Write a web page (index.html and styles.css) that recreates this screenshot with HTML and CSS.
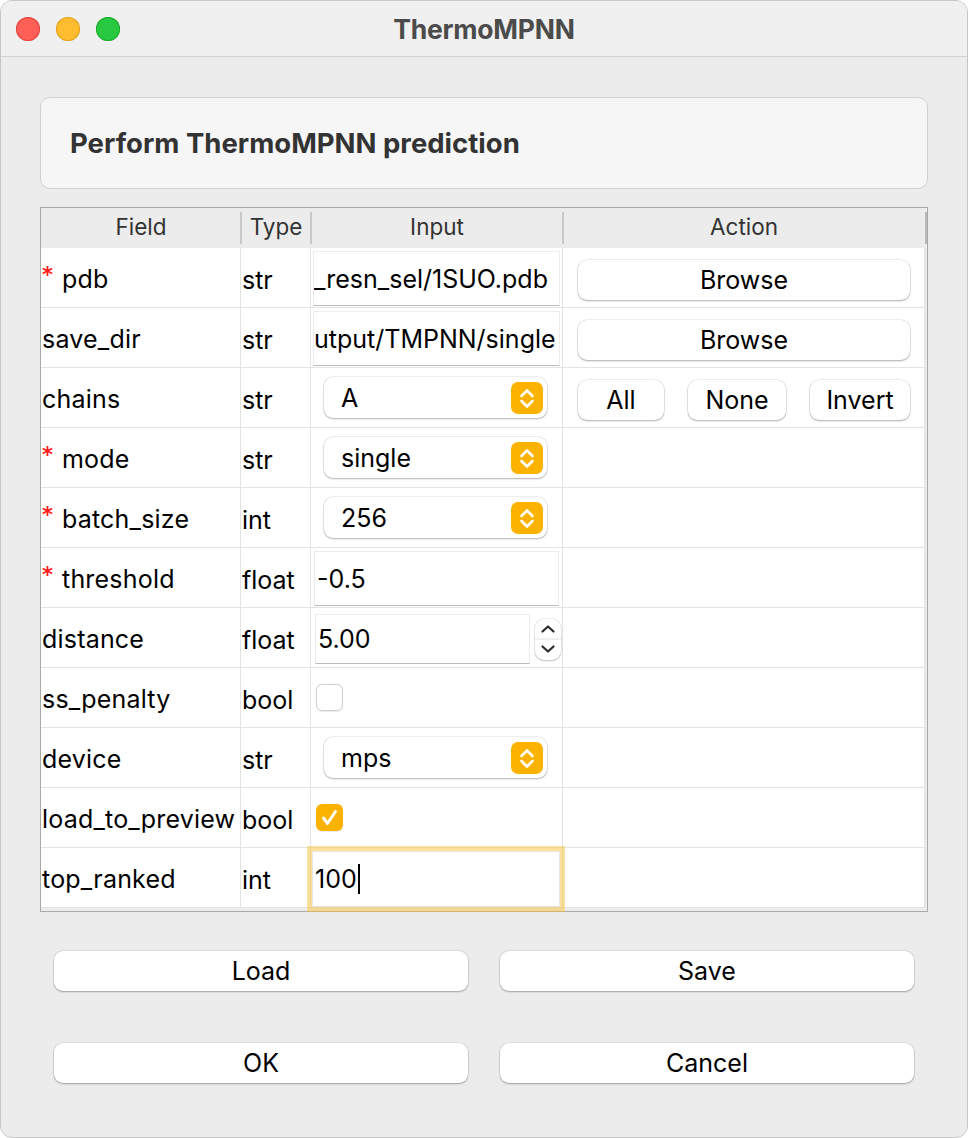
FILE: index.html
```html
<!DOCTYPE html>
<html>
<head>
<meta charset="utf-8">
<title>ThermoMPNN</title>
<link rel="stylesheet" href="styles.css">
</head>
<body>
<div class="window">
  <div class="titlebar">
    <div class="lights">
      <span class="light red"></span>
      <span class="light yellow"></span>
      <span class="light green"></span>
    </div>
    <div class="title">ThermoMPNN</div>
    <div></div>
  </div>

  <div class="content">
    <div class="banner">Perform ThermoMPNN prediction</div>

    <div class="table">
      <div class="thead">
        <div class="th">Field</div>
        <div class="th">Type</div>
        <div class="th">Input</div>
        <div class="th">Action</div>
      </div>

      <div class="row">
        <div class="cell field"><span class="req">*</span>pdb</div>
        <div class="cell type">str</div>
        <div class="cell input"><div class="lineedit">_resn_sel/1SUO.pdb</div></div>
        <div class="cell action"><div class="btn browse">Browse</div></div>
      </div>

      <div class="row">
        <div class="cell field">save_dir</div>
        <div class="cell type">str</div>
        <div class="cell input"><div class="lineedit">utput/TMPNN/single</div></div>
        <div class="cell action"><div class="btn browse">Browse</div></div>
      </div>

      <div class="row">
        <div class="cell field">chains</div>
        <div class="cell type">str</div>
        <div class="cell input">
          <div class="combo"><span>A</span>
            <svg class="chev" width="32" height="32" viewBox="0 0 32 32"><rect width="32" height="32" rx="7" fill="#fcb300"/><polyline points="10.5,14 16,8.5 21.5,14" fill="none" stroke="#fff" stroke-width="2.6" stroke-linecap="round" stroke-linejoin="round"/><polyline points="10.5,19 16,24.5 21.5,19" fill="none" stroke="#fff" stroke-width="2.6" stroke-linecap="round" stroke-linejoin="round"/></svg>
          </div>
        </div>
        <div class="cell action">
          <div class="chain-btns">
            <div class="btn small">All</div>
            <div class="btn small">None</div>
            <div class="btn small">Invert</div>
          </div>
        </div>
      </div>

      <div class="row">
        <div class="cell field"><span class="req">*</span>mode</div>
        <div class="cell type">str</div>
        <div class="cell input">
          <div class="combo"><span>single</span>
            <svg class="chev" width="32" height="32" viewBox="0 0 32 32"><rect width="32" height="32" rx="7" fill="#fcb300"/><polyline points="10.5,14 16,8.5 21.5,14" fill="none" stroke="#fff" stroke-width="2.6" stroke-linecap="round" stroke-linejoin="round"/><polyline points="10.5,19 16,24.5 21.5,19" fill="none" stroke="#fff" stroke-width="2.6" stroke-linecap="round" stroke-linejoin="round"/></svg>
          </div>
        </div>
        <div class="cell action"></div>
      </div>

      <div class="row">
        <div class="cell field"><span class="req">*</span>batch_size</div>
        <div class="cell type">int</div>
        <div class="cell input">
          <div class="combo"><span>256</span>
            <svg class="chev" width="32" height="32" viewBox="0 0 32 32"><rect width="32" height="32" rx="7" fill="#fcb300"/><polyline points="10.5,14 16,8.5 21.5,14" fill="none" stroke="#fff" stroke-width="2.6" stroke-linecap="round" stroke-linejoin="round"/><polyline points="10.5,19 16,24.5 21.5,19" fill="none" stroke="#fff" stroke-width="2.6" stroke-linecap="round" stroke-linejoin="round"/></svg>
          </div>
        </div>
        <div class="cell action"></div>
      </div>

      <div class="row">
        <div class="cell field"><span class="req">*</span>threshold</div>
        <div class="cell type">float</div>
        <div class="cell input"><div class="lineedit wide">-0.5</div></div>
        <div class="cell action"></div>
      </div>

      <div class="row">
        <div class="cell field">distance</div>
        <div class="cell type">float</div>
        <div class="cell input spinrow">
          <div class="lineedit spinedit">5.00</div>
          <div class="spin">
            <svg width="26" height="41" viewBox="0 0 26 41"><line x1="0" y1="20" x2="26" y2="20" stroke="#e2e2e2" stroke-width="1"/><polyline points="7.5,12.5 13,7.5 18.5,12.5" fill="none" stroke="#2b2b2b" stroke-width="2.2" stroke-linecap="round" stroke-linejoin="round"/><polyline points="7.5,27.5 13,32.5 18.5,27.5" fill="none" stroke="#2b2b2b" stroke-width="2.2" stroke-linecap="round" stroke-linejoin="round"/></svg>
          </div>
        </div>
        <div class="cell action"></div>
      </div>

      <div class="row">
        <div class="cell field">ss_penalty</div>
        <div class="cell type">bool</div>
        <div class="cell input"><div class="checkbox"></div></div>
        <div class="cell action"></div>
      </div>

      <div class="row">
        <div class="cell field">device</div>
        <div class="cell type">str</div>
        <div class="cell input">
          <div class="combo"><span>mps</span>
            <svg class="chev" width="32" height="32" viewBox="0 0 32 32"><rect width="32" height="32" rx="7" fill="#fcb300"/><polyline points="10.5,14 16,8.5 21.5,14" fill="none" stroke="#fff" stroke-width="2.6" stroke-linecap="round" stroke-linejoin="round"/><polyline points="10.5,19 16,24.5 21.5,19" fill="none" stroke="#fff" stroke-width="2.6" stroke-linecap="round" stroke-linejoin="round"/></svg>
          </div>
        </div>
        <div class="cell action"></div>
      </div>

      <div class="row">
        <div class="cell field">load_to_preview</div>
        <div class="cell type">bool</div>
        <div class="cell input">
          <div class="checkbox checked">
            <svg width="27" height="27" viewBox="0 0 27 27"><polyline points="7.5,14 11.5,19.5 19.5,7.5" fill="none" stroke="#fff" stroke-width="3" stroke-linecap="round" stroke-linejoin="round"/></svg>
          </div>
        </div>
        <div class="cell action"></div>
      </div>

      <div class="row">
        <div class="cell field">top_ranked</div>
        <div class="cell type">int</div>
        <div class="cell input"><div class="lineedit focused">100<span class="caret"></span></div></div>
        <div class="cell action"></div>
      </div>
    </div>

    <div class="actions">
      <div class="btn big">Load</div>
      <div class="btn big">Save</div>
      <div class="btn big">OK</div>
      <div class="btn big">Cancel</div>
    </div>
  </div>
</div>
</body>
</html>
```

FILE: styles.css
```css
* { box-sizing: border-box; }

html, body {
  margin: 0;
  padding: 0;
  background: #ffffff;
}

body {
  font-family: Inter, "Noto Sans", sans-serif;
  color: #000;
}

.window {
  width: 968px;
  height: 1138px;
  background: #ececec;
  border: 1px solid #c6c6c6;
  border-radius: 12px;
  overflow: hidden;
  display: flex;
  flex-direction: column;
}

/* title bar */
.titlebar {
  flex: none;
  height: 56px;
  background: #f0f0f0;
  border-bottom: 1px solid #d2d2d2;
  display: grid;
  grid-template-columns: 1fr auto 1fr;
  align-items: center;
}

.lights {
  display: flex;
  gap: 16px;
  padding-left: 15px;
}

.light {
  width: 24px;
  height: 24px;
  border-radius: 50%;
  display: block;
}
.light.red { background: #fe5f57; box-shadow: inset 0 0 0 1px #e2463f; }
.light.yellow { background: #febc2e; box-shadow: inset 0 0 0 1px #dea123; }
.light.green { background: #28c840; box-shadow: inset 0 0 0 1px #1aab29; }

.title {
  font-size: 26.5px;
  font-weight: 700;
  color: #4b4b4b;
  letter-spacing: -0.2px;
}

/* content */
.content {
  padding: 40px 39px 0 39px;
}

.banner {
  height: 92px;
  background: #f6f6f6;
  border: 1px solid #d0d0d0;
  border-radius: 10px;
  display: flex;
  align-items: center;
  padding-left: 29px;
  font-size: 27.5px;
  font-weight: 700;
  color: #333;
}

/* table */
.table {
  margin-top: 18px;
  height: 705px;
  border: 1px solid #a9a9a9;
  padding-right: 2px;
  background: #ececec;
}

.thead, .row {
  display: grid;
  grid-template-columns: 200px 70px 252px 1fr;
}

.thead {
  height: 40px;
  background: #ececec;
}

.th {
  position: relative;
  display: flex;
  align-items: center;
  justify-content: center;
  padding-bottom: 3px;
  font-size: 22.5px;
  color: #333;
}

.th::after {
  content: "";
  position: absolute;
  right: -1px;
  top: 4px;
  bottom: 4px;
  width: 2px;
  background: #c9c9c9;
}

.th:last-child::after {
  right: -2px;
  background: #b9b9b9;
}

.row {
  height: 60px;
  background: #fff;
  border-bottom: 1px solid #e3e3e3;
}

.cell {
  display: flex;
  align-items: center;
  border-right: 1px solid #e3e3e3;
  font-size: 25px;
  white-space: nowrap;
  min-width: 0;
}

.field { padding-left: 1px; padding-top: 2px; letter-spacing: 0.2px; }
.type { padding-left: 1px; padding-top: 4px; }

.req {
  color: #ff1a1a;
  font-family: "DejaVu Sans", sans-serif;
  font-weight: 700;
  font-size: 21px;
  width: 20px;
  align-self: flex-start;
  margin-top: 15px;
  line-height: 1;
}

.input, .action { align-items: flex-start; }

/* line edits */
.lineedit {
  margin: 3px 2px 0 2px;
  height: 55px;
  flex: 1;
  background: #fff;
  border: 1px solid #ececec;
  border-bottom: 1px solid #bcbcbc;
  display: flex;
  align-items: center;
  padding-left: 0;
  overflow: hidden;
  font-size: 25px;
}

.lineedit.wide { margin-left: 3px; margin-right: 3px; padding-left: 2px; }

.spinrow { padding-left: 4px; }

.lineedit.spinedit {
  flex: none;
  width: 215px;
  height: 50px;
  margin: 6px 0 0 0;
  padding-left: 2px;
}

.spin {
  margin: 11px 0 0 5px;
  width: 26px;
  height: 41px;
  background: #fff;
  border-radius: 9px;
  box-shadow: 0 0 0 0.5px rgba(0, 0, 0, 0.12), 0 1px 2px rgba(0, 0, 0, 0.2);
}
.spin svg { display: block; }

.lineedit.focused {
  margin: 3px 2px 0 1px;
  height: 56px;
  border-color: #e6e6e6;
  padding-left: 2px;
  box-shadow: 0 0 0 5px rgba(246, 195, 60, 0.5);
  position: relative;
  z-index: 1;
}

.caret {
  display: inline-block;
  width: 2px;
  height: 30px;
  background: #000;
  margin-left: 1px;
}

/* combos */
.combo {
  margin: 9px 15px 0 13px;
  flex: 1;
  height: 41px;
  background: #fff;
  border-radius: 9px;
  box-shadow: 0 0 0 0.5px rgba(0, 0, 0, 0.12), 0 1px 2px rgba(0, 0, 0, 0.25);
  display: flex;
  align-items: center;
  justify-content: space-between;
  padding: 0 4px 0 17px;
  font-size: 25px;
}

.chev { display: block; }

/* checkboxes */
.checkbox {
  margin: 16px 0 0 5px;
  width: 27px;
  height: 27px;
  border-radius: 6px;
  background: #fff;
  border: 1px solid #cfcfcf;
  box-shadow: 0 0.5px 1px rgba(0, 0, 0, 0.08);
}

.checkbox.checked {
  background: #fcb300;
  border: none;
}
.checkbox svg { display: block; }

/* buttons */
.btn {
  background: #fff;
  border-radius: 9px;
  box-shadow: 0 0 0 0.5px rgba(0, 0, 0, 0.12), 0 1px 2px rgba(0, 0, 0, 0.28);
  display: flex;
  align-items: center;
  justify-content: center;
  font-size: 25px;
  color: #000;
}

.browse {
  margin: 12px 14px 0 15px;
  flex: 1;
  height: 40px;
}

.chain-btns {
  margin: 12px 14px 0 15px;
  flex: 1;
  display: grid;
  grid-template-columns: 86px 98px 100px;
  justify-content: space-between;
}

.btn.small { height: 40px; }

.actions {
  margin: 39px 14px 0 14px;
  display: grid;
  grid-template-columns: 414px 414px;
  column-gap: 32px;
  row-gap: 52px;
}

.btn.big { height: 40px; }
```
